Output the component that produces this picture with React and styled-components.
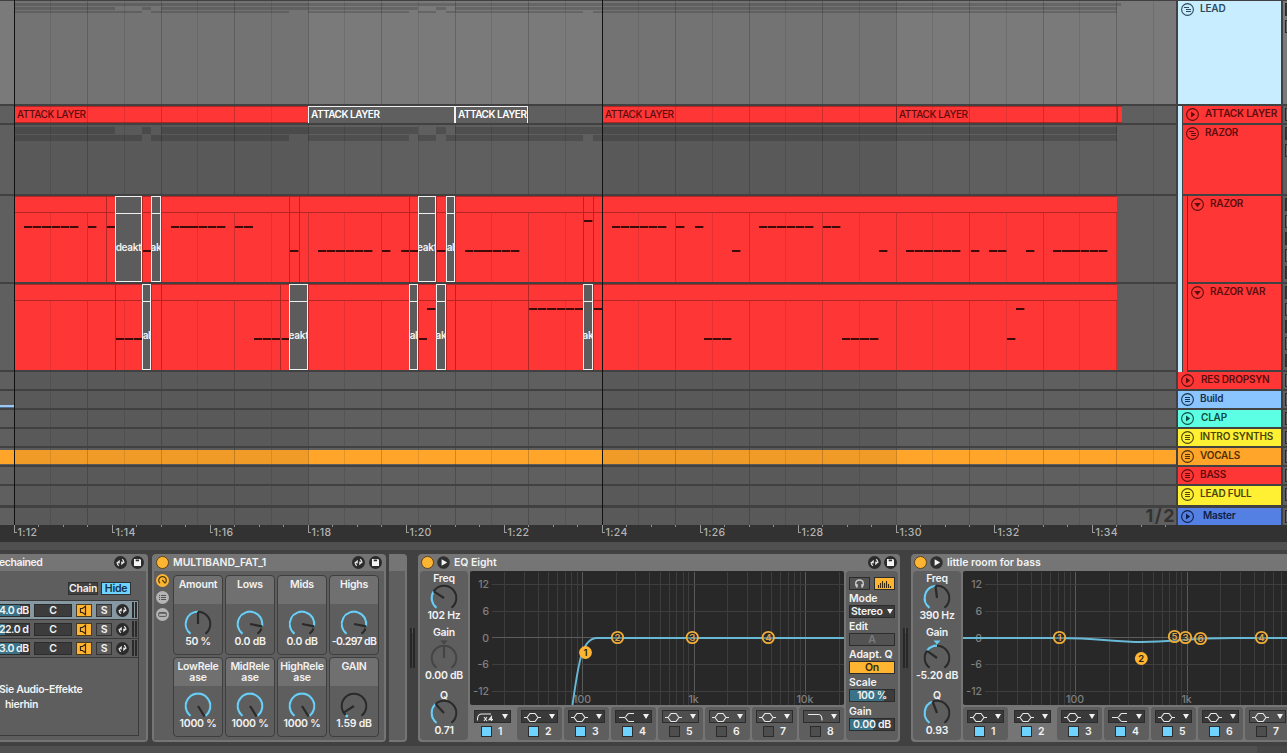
import React from 'react'
import styled, { createGlobalStyle, css } from 'styled-components'

const BEAT = 36.75
const START = 14

const range = (from, to) =>
  Array.from({ length: to - from }, (_, i) => from + i)

const gridStops = range(1, 32)
  .map(k => {
    const x = Math.floor(START + k * BEAT)
    const color = k % 2 === 0 ? 'rgba(0,0,0,0.19)' : 'rgba(0,0,0,0.1)'
    return `transparent ${x}px, ${color} ${x}px, ${color} ${x +
      1}px, transparent ${x + 1}px`
  })
  .join(', ')

const gridImage = `linear-gradient(to right, ${gridStops})`

const shadeImage = `linear-gradient(to right, transparent 14px, rgba(0,0,0,0.06) 14px,
  rgba(0,0,0,0.06) 308px, transparent 308px, transparent 602px, rgba(0,0,0,0.06) 602px,
  rgba(0,0,0,0.06) 896px, transparent 896px)`

// [x, width] pairs of the clips inside a folded group
const upperParts = [[15, 100], [142, 9], [161, 257], [436, 10], [455, 662]]
const lowerParts = [
  [15, 127],
  [151, 138],
  [308, 101],
  [418, 18],
  [446, 137],
  [593, 524]
]

// notes are [x, y, number of notes], muted clips are [x, width, label]
const razor = {
  edges: [106, 142, 161, 289, 299, 409, 436, 455, 583, 593],
  muted: [
    [115, 27, 'deakt'],
    [151, 10, 'ak'],
    [418, 18, 'eakt'],
    [446, 9, 'al']
  ],
  notes: [
    [24.5, 30, 6],
    [88, 30, 1],
    [107, 30, 0.9],
    [143, 54, 0.9],
    [171.5, 30, 6],
    [235.5, 30, 2],
    [290, 54, 1],
    [318.5, 54, 6],
    [382, 54, 1],
    [401, 54, 1.9],
    [437, 54, 1],
    [465.5, 54, 6],
    [584, 24, 1],
    [612.5, 30, 6],
    [676.5, 30, 1],
    [695, 30, 1],
    [732.5, 54, 1],
    [759.5, 30, 6],
    [823.5, 30, 2],
    [879.5, 54, 1],
    [906.5, 54, 6],
    [971, 54, 1],
    [989.5, 54, 2],
    [1026.5, 54, 1],
    [1053.5, 54, 6]
  ]
}

const razorVar = {
  edges: [115, 151, 161, 280, 308, 418, 446, 455, 528, 593],
  muted: [
    [142, 9, 'al'],
    [289, 19, 'eakt'],
    [409, 9, 'al'],
    [436, 10, 'ak'],
    [583, 10, 'ak']
  ],
  notes: [
    [116, 54, 3],
    [254.5, 54, 4],
    [419, 54, 0.9],
    [427, 24, 1],
    [529, 24, 6],
    [594, 24, 0.9],
    [704.5, 54, 3],
    [842.5, 54, 4],
    [1007.5, 54, 1],
    [1016.5, 24, 1]
  ]
}

const tracks = [
  { name: 'LEAD', color: '#c8edff', ink: '#2c4a5c', icon: 'group', h: 103 },
  { name: 'ATTACK LAYER', color: '#ff3636', icon: 'play', h: 17, level: 1 },
  { name: 'RAZOR', color: '#ff3636', icon: 'group', h: 69, level: 1 },
  { name: 'RAZOR', color: '#ff3636', icon: 'fold', h: 86, level: 2 },
  { name: 'RAZOR VAR', color: '#ff3636', icon: 'fold', h: 86, level: 2 },
  { name: 'RES DROPSYN', color: '#ff3636', icon: 'play', h: 17, pad: 1 },
  { name: 'Build', color: '#8bc5ff', ink: '#17304a', icon: 'list', h: 17 },
  { name: 'CLAP', color: '#5dffe4', ink: '#0f4a41', icon: 'play', h: 17, pad: 1 },
  { name: 'INTRO SYNTHS', color: '#fff034', ink: '#4a4508', icon: 'list', h: 17 },
  { name: 'VOCALS', color: '#ffa529', ink: '#4f2f05', icon: 'list', h: 17 },
  { name: 'BASS', color: '#ff3636', icon: 'list', h: 17 },
  { name: 'LEAD FULL', color: '#fff034', ink: '#4a4508', icon: 'list', h: 19, gap: 3 },
  { name: 'Master', color: '#5480e4', ink: '#101f45', icon: 'play', h: 17, pad: 3, gap: 0 }
]

const macros = [
  { label: 'Amount', value: '50 %', angle: 0 },
  { label: 'Lows', value: '0.0 dB', angle: 101 },
  { label: 'Mids', value: '0.0 dB', angle: 101 },
  { label: 'Highs', value: '-0.297 dB', angle: 101 },
  { label: 'LowRele ase', value: '1000 %', angle: 148 },
  { label: 'MidRele ase', value: '1000 %', angle: 148 },
  { label: 'HighRele ase', value: '1000 %', angle: 148 },
  { label: 'GAIN', value: '1.59 dB', angle: -123 }
]

const chains = [
  { volume: '4.0 dB', level: 20, active: true },
  { volume: '22.0 dB', level: 5 },
  { volume: '3.0 dB', level: 20 }
]

const polar = (cx, cy, r, deg) => {
  const a = (deg * Math.PI) / 180
  return [cx + r * Math.sin(a), cy - r * Math.cos(a)]
}

const arc = (from, to, r = 12.3) => {
  const [x1, y1] = polar(14, 14, r, from)
  const [x2, y2] = polar(14, 14, r, to)
  return `M${x1} ${y1} A${r} ${r} 0 ${to - from > 180 ? 1 : 0} 1 ${x2} ${y2}`
}

const Knob = ({ angle, bipolar, off }) => {
  const [px, py] = polar(14, 14, 12.3, angle)
  const dark = off ? '#454545' : '#2a2a2a'
  const low = angle === -123
  return (
    <KnobSvg width="28" height="28" viewBox="0 0 28 28">
      <path d={arc(-143, 143)} fill="none" stroke={dark} strokeWidth="2" />
      {!off && !low && (
        <path
          d={bipolar ? arc(angle, 0) : arc(-143, Math.min(angle, 143))}
          fill="none"
          stroke="#6ccdf4"
          strokeWidth="2.2"
        />
      )}
      {angle > 90 && angle < 140 && (
        <path d={arc(angle, 112)} fill="none" stroke="#5e5e5e" strokeWidth="2.6" />
      )}
      {low && <path d={arc(-150, -138)} stroke="#6ccdf4" strokeWidth="2.6" />}
      <path d={`M14 14 L${px} ${py}`} stroke={dark} strokeWidth="2.2" />
      {(bipolar || off) && (
        <path d="M10.5 -3.5 h7 l-3.5 4 z" fill={off ? '#454545' : '#6ccdf4'} />
      )}
    </KnobSvg>
  )
}

const TrackIcon = ({ type, color }) => (
  <svg width="13" height="13" viewBox="0 0 13 13" fill="none" stroke={color}>
    <circle cx="6.5" cy="6.5" r="5.9" strokeWidth="1.1" />
    {type === 'play' && <path d="M5 3.6 L9.2 6.5 L5 9.4 z" fill={color} stroke="none" />}
    {type === 'fold' && <path d="M3.2 4.9 h6.6 L6.5 9.2 z" fill={color} stroke="none" />}
    {type === 'list' && <path d="M4 4.5 h5 M4 6.5 h5 M4 8.5 h5" />}
    {type === 'group' && <path d="M3 4.5 h5 M5 6.5 h5 M5 8.5 h5" />}
  </svg>
)

const SwapIcon = () => (
  <svg width="13" height="13" viewBox="0 0 13 13">
    <circle cx="6.5" cy="6.5" r="6.5" fill="#2b2b2b" />
    <path
      d="M3.2 7 Q3.2 9 5 9.6 M9.8 6 Q9.8 4 8 3.4"
      stroke="#e2e2e2"
      strokeWidth="1.2"
      fill="none"
    />
    <path d="M2 7 L5.8 3.8 L5.8 7.4 z M11 6 L7.2 9.2 L7.2 5.6 z" fill="#e2e2e2" />
  </svg>
)

const SaveIcon = () => (
  <svg width="13" height="13" viewBox="0 0 13 13">
    <circle cx="6.5" cy="6.5" r="6.5" fill="#2b2b2b" />
    <path d="M3 3 h6 l1 1 v6 h-7 z" fill="#f4f4f4" />
    <path d="M4.7 3.6 h3.4 v1.7 h-3.4 z" fill="#2b2b2b" />
  </svg>
)

const PlayIcon = () => (
  <svg width="13" height="13" viewBox="0 0 13 13">
    <circle cx="6.5" cy="6.5" r="6.3" fill="#303030" />
    <path d="M4.6 3.2 L10.2 6.5 L4.6 9.8 z" fill="#f4f4f4" />
  </svg>
)

const SpeakerIcon = () => (
  <svg width="16" height="13" viewBox="0 0 16 13" fill="none" stroke="#33240a">
    <path d="M4.5 4.5 h2 l3 -2.3 v8.6 l-3 -2.3 h-2 z" strokeWidth="1.2" />
  </svg>
)

const shapes = {
  cut: 'M1.5 9.5 V8 Q1.5 3 6 3 H15',
  bell: 'M1 6.5 H4 L7 2.5 H12 L15 6.5 H18 M4 6.5 L7 10.5 H12 L15 6.5',
  shelf: 'M2 6.5 H7.5 C9.5 6.5 9.5 2.5 12 2.5 H17 M7.5 6.5 C9.5 6.5 9.5 10.5 12 10.5 H17',
  lowpass: 'M3 3.5 H13.5 Q17 3.5 17 9.5'
}

const Band = ({ n, shape, on, selected }) => (
  <BandCell $selected={selected}>
    <BandType $off={!on}>
      <svg
        width="19"
        height="12"
        viewBox="0 0 19 12"
        fill="none"
        stroke="#e8e8e8"
        strokeWidth="1.1"
      >
        <path d={shapes[shape]} />
        {shape === 'cut' && (
          <path d="M8 6 l3 4 M11 6 l-3 4 M15.5 10 V5.5 L13 8.6 H17" />
        )}
      </svg>
      <Down />
    </BandType>
    <BandFoot>
      <Check $on={on} />
      <BandNumber>{n}</BandNumber>
    </BandFoot>
  </BandCell>
)

const freqX = f => 112.5 + 111.5 * Math.log10(f / 100)

const freqs = [
  ...range(2, 11).map(i => i * 10),
  ...range(2, 11).map(i => i * 100),
  ...range(2, 11).map(i => i * 1000),
  20000
]

const Spectrum = ({ curve, nodes }) => (
  <Graph width="374" height="134" viewBox="0 0 374 134">
    <rect width="374" height="134" rx="2" fill="#282828" />
    {freqs.map(f => {
      const major = [100, 1000, 10000].includes(f)
      return (
        <rect
          key={f}
          x={Math.round(freqX(f) - 0.5)}
          y="1"
          width="1"
          height={major ? 122 : 133}
          fill={major ? '#5a5a5a' : '#3d3d3d'}
        />
      )
    })}
    {[12, 6, 0, -6, -12].map((db, i) => (
      <g key={db}>
        <rect
          x="22"
          y={Math.round(13 + i * 26.7)}
          width="352"
          height="1"
          fill={db === 0 ? '#5c5c5c' : '#3f3f3f'}
        />
        <text x="19" y={17.3 + i * 26.7} textAnchor="end">
          {db}
        </text>
      </g>
    ))}
    {[[100, '100'], [1000, '1k'], [10000, '10k']].map(([f, label]) => (
      <text key={label} x={freqX(f) - 0.5} y="132" textAnchor="middle">
        {label}
      </text>
    ))}
    <path d={curve} fill="none" stroke="#67b9d6" strokeWidth="1.9" />
    {nodes.map(([x, y, n, filled]) => (
      <g key={n}>
        <circle
          cx={x}
          cy={y}
          r={filled ? 6.4 : 5.7}
          fill={filled ? '#ffb532' : 'rgba(40,40,40,0.35)'}
          stroke={filled ? 'none' : '#f2ae38'}
          strokeWidth="1.8"
        />
        <NodeLabel x={x} y={y + 3.5} textAnchor="middle" $filled={filled}>
          {n}
        </NodeLabel>
      </g>
    ))}
  </Graph>
)

const EqDevice = ({ title, knobs, curve, nodes, bands, selected, children }) => (
  <Device $width={482}>
    <DeviceHead>
      <Lamp />
      <PlayIcon />
      <Title>{title}</Title>
      {children && (
        <HeadTools $tight>
          <SwapIcon />
          <SaveIcon />
        </HeadTools>
      )}
    </DeviceHead>
    <EqBody>
      <KnobPanel>
        {knobs.map(k => (
          <KnobSlot key={k.label} $label={k.label}>
            <span>{k.label}</span>
            <Knob angle={k.angle} bipolar={k.bipolar} off={k.off} />
            <KnobValue>{k.value}</KnobValue>
          </KnobSlot>
        ))}
      </KnobPanel>
      <EqMain>
        <Spectrum curve={curve} nodes={nodes} />
        <Bands>
          {bands.map((b, i) => (
            <Band key={i} n={i + 1} shape={b[0]} on={b[1]} selected={selected === i + 1} />
          ))}
        </Bands>
      </EqMain>
      {children}
    </EqBody>
  </Device>
)

const MidiLane = ({ data }) => (
  <Lane $h={86}>
    <MidiClip>
      <MidiHead />
    </MidiClip>
    {data.edges.map(x => (
      <Edge key={x} style={{ left: x }} />
    ))}
    {data.notes.map(([x, y, count]) => (
      <Notes
        key={`${x}-${y}`}
        style={{ left: Math.floor(x), top: y, width: count * 9.2 }}
      />
    ))}
    {data.muted.map(([x, w, label]) => (
      <Muted key={x} style={{ left: x, width: w }}>
        <MutedHead />
        <MutedText>{label}</MutedText>
      </Muted>
    ))}
  </Lane>
)

const Parts = ({ parts, y, h }) =>
  parts.map(([x, w]) => (
    <Part key={x} style={{ left: x, width: w, top: y, height: h }} />
  ))

const Arrangement = () => (
  <Lanes>
    <Lane $h={103} $bright>
      <Parts parts={[[15, 1106]]} y={2} h={3} />
      <Parts parts={upperParts} y={6} h={3} />
      <Parts parts={lowerParts} y={10} h={2} />
    </Lane>
    <Lane $h={17}>
      <NamedClip style={{ left: 15, width: 293 }}>ATTACK LAYER</NamedClip>
      <NamedClip $muted style={{ left: 308, width: 147 }}>ATTACK LAYER</NamedClip>
      <NamedClip $muted style={{ left: 455, width: 73 }}>ATTACK LAYER</NamedClip>
      <NamedClip style={{ left: 603, width: 293 }}>ATTACK LAYER</NamedClip>
      <NamedClip $edge style={{ left: 896, width: 221 }}>ATTACK LAYER</NamedClip>
      <NamedClip $edge style={{ left: 1117, width: 4 }} />
    </Lane>
    <Lane $h={69}>
      <Parts parts={upperParts} y={2} h={7} />
      <Parts parts={lowerParts} y={10} h={6} />
    </Lane>
    <MidiLane data={razor} />
    <MidiLane data={razorVar} />
    <Lane $h={17} />
    <Lane $h={17}>
      <BuildClip />
    </Lane>
    <Lane $h={17} />
    <Lane $h={17} />
    <Lane $h={17}>
      <AudioClip />
    </Lane>
    <Lane $h={17} />
    <Lane $h={19} $gap={3} />
    <Lane $h={17} $gap={0}>
      <Resolution>1/2</Resolution>
    </Lane>
    <Marker style={{ left: 14 }} />
    <Marker style={{ left: 602 }} />
  </Lanes>
)

const Ruler = () => (
  <RulerBar>
    {range(0, 12).map(i => (
      <RulerMark key={i}>
        <Foot />
        <Time>{`1:${12 + i * 2}`}</Time>
      </RulerMark>
    ))}
  </RulerBar>
)

const App = () => (
  <Page>
    <GlobalStyle />
    <Top>
      <Arrangement />
      <Headers>
        {tracks.map((t, i) => (
          <Header key={i} $h={t.h} $gap={t.gap}>
            {t.level > 0 && <Nest $color="#c8edff" />}
            {t.level > 1 && <Nest $color="#ff3636" />}
            <HeaderBox $color={t.color} $ink={t.ink || '#5c0d0d'} $pad={t.pad} $gap={t.gap}>
              <TrackIcon type={t.icon} color={t.ink || '#5c0d0d'} />
              <TrackName>{t.name}</TrackName>
            </HeaderBox>
          </Header>
        ))}
      </Headers>
      <Mixer>
        {tracks.map((t, i) => (
          <Strip key={i} $h={t.h} $gap={t.gap} $bright={i === 0}>
            {range(0, Math.min(5, Math.ceil((t.h - 8) / 17)))
              .slice(0, t.icon === 'group' ? 2 : 5)
              .map(n => (
                <Slot key={n} $dark={t.h > 20 && n % 2 === 0} />
              ))}
          </Strip>
        ))}
      </Mixer>
    </Top>
    <Ruler />
    <Splitter />
    <Devices>
      <Device $width={148} $open>
        <DeviceHead $tight>
          <Title $cut>echained</Title>
          <HeadTools>
            <SwapIcon />
            <SaveIcon />
          </HeadTools>
        </DeviceHead>
        <RackBody>
          <RackButtons>
            <SmallButton>Chain</SmallButton>
            <SmallButton $on>Hide</SmallButton>
          </RackButtons>
          <ChainList>
            {chains.map(c => (
              <Chain key={c.volume} $active={c.active}>
                <Volume $level={c.level}>{c.volume}</Volume>
                <Pan>C</Pan>
                <Speaker>
                  <SpeakerIcon />
                </Speaker>
                <Solo>S</Solo>
                <SwapIcon />
                <ChainMeter />
              </Chain>
            ))}
            <DropHint>
              <HintLine>Sie Audio-Effekte</HintLine>
              <HintLine $second>hierhin</HintLine>
            </DropHint>
          </ChainList>
        </RackBody>
      </Device>
      <Gap $w={4} />
      <Device $width={234}>
        <DeviceHead $inset={4}>
          <Lamp />
          <Title>MULTIBAND_FAT_1</Title>
          <HeadTools>
            <SwapIcon />
            <SaveIcon />
          </HeadTools>
        </DeviceHead>
        <MacroBody>
          <Views>
            <svg width="13" height="13" viewBox="0 0 13 13">
              <circle cx="6.5" cy="6.5" r="6.5" fill="#ffb532" />
              <path
                d="M4 9.2 A3.8 3.8 0 1 1 9 9.2 M6.3 6 L9 9.2"
                stroke="#55400f"
                fill="none"
                strokeWidth="1.3"
              />
            </svg>
            <svg width="13" height="13" viewBox="0 0 13 13">
              <circle cx="6.5" cy="6.5" r="6.5" fill="#b4b4b4" />
              <path d="M3 4.5 h1 M5 4.5 h5 M3 6.5 h1 M5 6.5 h5 M3 8.5 h1 M5 8.5 h5" stroke="#555" />
            </svg>
            <svg width="13" height="13" viewBox="0 0 13 13">
              <circle cx="6.5" cy="6.5" r="6.5" fill="#b4b4b4" />
              <rect x="2.7" y="4.6" width="7.6" height="3.8" rx="0.8" fill="none" stroke="#555" />
              <path d="M3 5.2 h7" stroke="#555" />
            </svg>
          </Views>
          <Macros>
            {macros.map(m => (
              <Macro key={m.label}>
                <MacroLabel>{m.label}</MacroLabel>
                <Knob angle={m.angle} />
                <MacroValue $long={m.value.length > 8}>{m.value}</MacroValue>
              </Macro>
            ))}
          </Macros>
        </MacroBody>
      </Device>
      <Gap $w={3} />
      <Stub />
      <Gap $w={11}>
        <OutMeter />
      </Gap>
      <EqDevice
        title="EQ Eight"
        selected={1}
        knobs={[
          { label: 'Freq', value: '102 Hz', angle: -57 },
          { label: 'Gain', value: '0.00 dB', angle: 0, off: true },
          { label: 'Q', value: '0.71', angle: -43 }
        ]}
        curve="M102.5 134 C108 96 111 67 127 67 H374"
        nodes={[[115.5, 81.5, 1, true], [147.5, 66.5, 2], [222.3, 66.5, 3], [298.3, 66.5, 4]]}
        bands={[
          ['cut', true],
          ['bell', true],
          ['bell', true],
          ['shelf', true],
          ['bell', false],
          ['bell', false],
          ['bell', false],
          ['lowpass', false]
        ]}
      >
        <Options>
          <OptionIcons>
            <OptionIcon>
              <svg width="11" height="11" viewBox="0 0 11 11" fill="none" stroke="#c8c8c8">
                <path d="M3 9 C0.5 6 1.5 2 5.5 2 C9.5 2 10.5 6 8 9" strokeWidth="1.4" />
                <path d="M2.8 6 v3.4 M8.2 6 v3.4" strokeWidth="1.8" />
              </svg>
            </OptionIcon>
            <OptionIcon $on>
              <svg width="15" height="10" viewBox="0 0 15 10" stroke="#3a2a08" strokeWidth="1.1">
                <path d="M1.5 9 V6 M3.5 9 V4 M5.5 9 V2 M7.5 9 V4 M9.5 9 V2 M11.5 9 V5 M13.5 9 V7" />
              </svg>
            </OptionIcon>
          </OptionIcons>
          <OptionLabel>Mode</OptionLabel>
          <OptionBox $select>
            Stereo
            <Down />
          </OptionBox>
          <OptionLabel>Edit</OptionLabel>
          <OptionBox $off>A</OptionBox>
          <OptionLabel>Adapt. Q</OptionLabel>
          <OptionBox $on>On</OptionBox>
          <OptionLabel>Scale</OptionLabel>
          <OptionBox $fill={34}>100 %</OptionBox>
          <OptionLabel $wide>Gain</OptionLabel>
          <OptionBox $fill={23}>0.00 dB</OptionBox>
        </Options>
      </EqDevice>
      <Gap $w={11}>
        <OutMeter />
      </Gap>
      <EqDevice
        title="little room for bass"
        selected={2}
        knobs={[
          { label: 'Freq', value: '390 Hz', angle: -7 },
          { label: 'Gain', value: '-5.20 dB', angle: -54, bipolar: true },
          { label: 'Q', value: '0.93', angle: -21 }
        ]}
        curve="M0 67 H95 C135 67 150 71 179 71 C212 71 220 67 270 67 H374"
        nodes={[
          [96.5, 66.5, 1],
          [178.3, 87.5, 2, true],
          [211.5, 65.5, 5],
          [222.5, 66.5, 3],
          [237.5, 67.5, 6],
          [298.5, 66.5, 4]
        ]}
        bands={[
          ['bell', true],
          ['bell', true],
          ['bell', true],
          ['shelf', true],
          ['bell', true],
          ['bell', true],
          ['bell', false],
          ['lowpass', false]
        ]}
      />
    </Devices>
    <ScrollBar>
      <ScrollThumb />
    </ScrollBar>
  </Page>
)

const GlobalStyle = createGlobalStyle`
  body {
    margin: 0;
    background: #414141;
  }

  * {
    box-sizing: border-box;
  }

  svg {
    display: block;
    flex: none;
  }
`

const Page = styled.div`
  display: flex;
  flex-direction: column;
  width: 1287px;
  height: 753px;
  overflow: hidden;
  background: #414141;
  color: #f2f2f2;
  font-family: Inter, 'Liberation Sans', sans-serif;
  font-size: 10.5px;
  font-weight: 500;
  line-height: 12px;
`

const Top = styled.div`
  display: flex;
  height: 525px;
`

const Lanes = styled.div`
  position: relative;
  width: 1176px;
  padding-top: 1px;
  overflow: hidden;
`

const Lane = styled.div`
  position: relative;
  height: ${p => p.$h}px;
  margin-bottom: ${p => (p.$gap === undefined ? 2 : p.$gap)}px;
  background: ${shadeImage} ${p => (p.$bright ? '#7a7a7a' : '#5f5f5f')};

  &::after {
    content: '';
    position: absolute;
    inset: 0;
    background: ${gridImage};
  }
`

const Part = styled.div`
  position: absolute;
  background: rgba(0, 0, 0, 0.16);
`

const NamedClip = styled.div`
  position: absolute;
  top: 0;
  height: 17px;
  padding: 0 2px;
  overflow: hidden;
  white-space: nowrap;
  font-size: 10px;
  letter-spacing: -0.4px;
  line-height: 15px;
  background: #ff3636;
  color: #5c0d0d;
  border-top: 1px solid #b32626;
  border-bottom: 1px solid #b32626;
  ${p => p.$edge && 'border-left: 1px solid #b32626;'}
  ${p =>
    p.$muted &&
    css`
      z-index: 1;
      padding: 0 1px 0 2px;
      background: #5f5f5f;
      color: #fff;
      font-weight: 600;
      letter-spacing: -0.5px;
      border: 1px solid #f0f0f0;
      border-bottom: 0;
    `}
`

const MidiClip = styled.div`
  position: absolute;
  left: 15px;
  width: 1102px;
  height: 86px;
  background: #ff3636;
`

const MidiHead = styled.div`
  position: relative;
  z-index: 1;
  height: 17px;
  background: #ff3636;
  border-top: 1px solid #b32626;
  border-bottom: 1px solid #b32626;
`

const Edge = styled.div`
  position: absolute;
  z-index: 1;
  width: 1px;
  height: 86px;
  background: #b32626;
`

const Notes = styled.div`
  position: absolute;
  height: 2px;
  background: repeating-linear-gradient(
    to right,
    #3f0a0a 0 8.3px,
    #b02626 8.3px 9.2px
  );
`

const Muted = styled.div`
  position: absolute;
  z-index: 1;
  height: 86px;
  overflow: hidden;
  background: #5c5c5c;
  border: 1px solid #f0f0f0;
`

const MutedHead = styled.div`
  height: 17px;
  border-bottom: 1px solid #f0f0f0;
`

const MutedText = styled.div`
  display: flex;
  justify-content: center;
  margin-top: 27px;
  font-size: 10px;
  font-weight: 600;
  letter-spacing: -0.3px;
`

const BuildClip = styled.div`
  position: absolute;
  top: 14px;
  left: 0;
  width: 14px;
  height: 3px;
  background: #9ec8f0;
  border-bottom: 1px solid #4d7396;
`

const AudioClip = styled.div`
  position: absolute;
  top: 2px;
  left: 0;
  width: 1176px;
  height: 14px;
  background: ${shadeImage} #ffa529;
`

const Resolution = styled.div`
  text-align: right;
  font-size: 18px;
  font-weight: 700;
  line-height: 16px;
  letter-spacing: 1.5px;
  color: #333;
`

const Marker = styled.div`
  position: absolute;
  z-index: 2;
  top: 0;
  width: 1px;
  height: 525px;
  background: #111;
`

const Headers = styled.div`
  width: 107px;
  padding: 1px 2px 0 2px;
`

const Header = styled.div`
  display: flex;
  height: ${p => p.$h + (p.$gap === undefined ? 2 : p.$gap)}px;
`

const Nest = styled.div`
  width: 5px;
  background: ${p => p.$color};
  border-right: 1px solid #414141;
`

const HeaderBox = styled.div`
  display: flex;
  flex: 1;
  gap: ${p => 6 + (p.$pad || 0)}px;
  padding: 2px 0 0 3px;
  overflow: hidden;
  background: ${p => p.$color};
  color: ${p => p.$ink};
  border-bottom: ${p => (p.$gap === undefined ? 2 : p.$gap)}px solid #414141;
`

const TrackName = styled.span`
  margin-top: -1px;
  white-space: nowrap;
  font-size: 10px;
  font-weight: 600;
  letter-spacing: -0.2px;
`

const Mixer = styled.div`
  width: 4px;
  margin-top: 1px;
`

const Strip = styled.div`
  height: ${p => p.$h}px;
  margin-bottom: ${p => (p.$gap === undefined ? 2 : p.$gap)}px;
  padding: 2px 0 0 2px;
  overflow: hidden;
  background: ${p => (p.$bright ? '#7a7a7a' : '#5f5f5f')};
`

const Slot = styled.div`
  height: 13px;
  margin-bottom: 4px;
  border: 1px solid #2a2a2a;
  border-right: 0;
  background: ${p => (p.$dark ? '#383838' : '#666')};
`

const RulerBar = styled.div`
  display: flex;
  height: 17px;
  padding-left: 14px;
  background: #323232;
`

const RulerMark = styled.div`
  display: flex;
  flex: none;
  width: 98px;
  background: linear-gradient(
      to right,
      transparent 24px,
      #909090 24px 25px,
      transparent 25px 49px,
      #909090 49px 50px,
      transparent 50px 73px,
      #909090 73px 74px,
      transparent 74px
    )
    0 0 / 98px 2px no-repeat;
`

const Foot = styled.div`
  width: 3px;
  height: 8px;
  border-left: 1px solid #9a9a9a;
  border-bottom: 1px solid #9a9a9a;
`

const Time = styled.span`
  margin-left: 0.5px;
  line-height: 15px;
  letter-spacing: 0.35px;
  color: #b4b4b4;
`

const Splitter = styled.div`
  height: 8px;
  background: #505050;
`

const Devices = styled.div`
  display: flex;
  height: 196px;
  padding: 4px 0;
  font-weight: 600;
  letter-spacing: -0.25px;
`

const Device = styled.div`
  flex: none;
  width: ${p => p.$width}px;
  height: 188px;
  overflow: hidden;
  background: #757575;
  border-radius: ${p => (p.$open ? '0 4px 4px 0' : '4px')};
`

const DeviceHead = styled.div`
  display: flex;
  align-items: center;
  gap: 3px;
  height: 17px;
  padding: 0 3px 0 ${p => (p.$tight ? 0 : p.$inset || 3)}px;
`

const Title = styled.span`
  white-space: nowrap;
  margin-left: ${p => (p.$cut ? -1 : 1)}px;
  letter-spacing: ${p => (p.$cut ? '-0.4px' : '-0.03px')};
`

const HeadTools = styled.div`
  display: flex;
  gap: ${p => (p.$tight ? 3 : 4)}px;
  margin: 0 ${p => (p.$tight ? 0 : 1)}px 0 auto;
`

const Lamp = styled.div`
  width: 13px;
  height: 13px;
  border-radius: 50%;
  background: #ffb532;
  border: 1px solid #5a431a;
`

const Gap = styled.div`
  flex: none;
  width: ${p => p.$w}px;
`

const OutMeter = styled.div`
  height: 40px;
  margin: 74px 3px 0;
  border-left: 2px solid #272727;
  border-right: 2px solid #272727;
  background: linear-gradient(#555 0 5px, #414141 5px);
`

const Stub = styled.div`
  flex: none;
  width: 18px;
  height: 188px;
  border: solid #757575;
  border-width: 17px 2px 2px 0;
  border-radius: 0 4px 4px 0;
  background: #5f5f5f;
`

const RackBody = styled.div`
  height: 169px;
  margin-right: 2px;
  padding: 11px 7px 0 0;
  background: #5e5e5e;
`

const RackButtons = styled.div`
  display: flex;
  justify-content: flex-end;
  gap: 3px;
  margin-right: 8px;
`

const SmallButton = styled.div`
  width: 30px;
  height: 13px;
  text-align: center;
  line-height: 12px;
  background: ${p => (p.$on ? '#6fd3ff' : '#414141')};
  color: ${p => (p.$on ? '#12303e' : '#f2f2f2')};
  border: 1px solid #303030;
`

const ChainList = styled.div`
  height: 136px;
  margin-top: 5px;
  border: 1px solid #3a3a3a;
  border-left: 0;
`

const Chain = styled.div`
  display: flex;
  align-items: center;
  gap: 4px;
  height: 19px;
  line-height: 11px;
  border-bottom: 1px solid #3a3a3a;
  background: ${p => (p.$active ? '#8698a1' : '#5e5e5e')};
`

const Volume = styled.div`
  width: 30px;
  height: 13px;
  overflow: hidden;
  white-space: nowrap;
  text-indent: -1px;
  letter-spacing: -0.5px;
  background: linear-gradient(
    to right,
    #3a7288 ${p => p.$level}px,
    #3a3a3a ${p => p.$level}px
  );
  border: 1px solid #2c2c2c;
  border-left: 0;
`

const Pan = styled.div`
  width: 38px;
  height: 13px;
  text-align: center;
  background: #3c3c3c;
  border: 1px solid #2c2c2c;
`

const Speaker = styled.div`
  width: 16px;
  height: 13px;
  background: #ffb532;
  outline: 1px solid #4a3a18;
  outline-offset: -1px;
`

const Solo = styled.div`
  width: 16px;
  height: 13px;
  text-align: center;
  background: #5c5c5c;
  border: 1px solid #333;
`

const ChainMeter = styled.div`
  width: 5px;
  height: 16px;
  margin-left: -1px;
  border: solid #2a2a2a;
  border-width: 0 2px;
`

const DropHint = styled.div`
  padding-top: 24px;
`

const HintLine = styled.div`
  white-space: nowrap;
  margin-left: ${p => (p.$second ? 5 : -1)}px;
  line-height: 15px;
  letter-spacing: -0.32px;
`

const MacroBody = styled.div`
  display: flex;
  height: 169px;
  margin: 0 2px;
  background: #5e5e5e;
`

const Views = styled.div`
  display: flex;
  flex-direction: column;
  gap: 4px;
  width: 19px;
  padding: 3px 0 0 2px;
`

const Macros = styled.div`
  display: grid;
  grid-template-columns: repeat(4, 50px);
  grid-template-rows: 80px 80px;
  gap: 2px;
  padding-top: 4px;
`

const Macro = styled.div`
  display: flex;
  flex-direction: column;
  align-items: center;
  overflow: hidden;
  text-align: center;
  background: linear-gradient(#707070 28px, #5e5e5e 28px);
  border: 1px solid #3e3e3e;
  border-radius: 4px;
`

const MacroLabel = styled.div`
  flex: none;
  width: 46px;
  height: 34px;
  padding-top: 3px;
  line-height: 11px;
`

const KnobSvg = styled.svg`
  overflow: visible;
`

const MacroValue = styled.div`
  margin-top: -2px;
  white-space: nowrap;
  ${p => p.$long && 'letter-spacing: -0.6px;'}
`

const EqBody = styled.div`
  display: flex;
  gap: 2px;
  margin-left: 2px;
`

const KnobPanel = styled.div`
  width: 48px;
  height: 169px;
  padding-top: 2px;
  background: #5e5e5e;
  border-radius: 4px;
`

const knobOffset = { Freq: -1, Gain: 5, Q: -3 }

const KnobSlot = styled.div`
  display: flex;
  flex-direction: column;
  align-items: center;
  height: ${p => (p.$label === 'Gain' ? 63 : 54)}px;
  white-space: nowrap;

  svg {
    margin-top: ${p => knobOffset[p.$label]}px;
  }
`

const KnobValue = styled.div`
  margin-top: -2px;
`

const EqMain = styled.div`
  width: 374px;
`

const Graph = styled.svg`
  text {
    fill: #808080;
    font-size: 10.5px;
    font-weight: 500;
    letter-spacing: 0;
  }
`

const NodeLabel = styled.text`
  && {
    fill: ${p => (p.$filled ? '#2a2210' : '#e0a445')};
    font-size: 9.5px;
    font-weight: 600;
  }
`

const Bands = styled.div`
  display: flex;
  gap: 2px;
  margin-top: 2px;
`

const BandCell = styled.div`
  width: 45px;
  height: 33px;
  padding: 3px 4px 0;
  border-radius: 3px;
  background: ${p => (p.$selected ? '#757575' : '#5e5e5e')};
`

const Down = styled.div`
  width: 0;
  height: 0;
  border: solid transparent;
  border-width: 5px 3.5px 0;
  border-top-color: #f2f2f2;
`

const BandType = styled.div`
  display: flex;
  align-items: center;
  justify-content: space-between;
  height: 13px;
  padding: 0 2px 0 1px;
  background: ${p => (p.$off ? '#4e4e4e' : '#3a3a3a')};
  border: 1px solid #2c2c2c;
`

const BandFoot = styled.div`
  display: flex;
  gap: 6px;
  padding: 3px 0 0 7px;
`

const Check = styled.div`
  width: 11px;
  height: 11px;
  background: ${p => (p.$on ? '#6fd3ff' : '#4e4e4e')};
  border: 1px solid #2c2c2c;
`

const BandNumber = styled.span`
  font-size: 10.5px;
`

const Options = styled.div`
  width: 52px;
  height: 169px;
  padding: 6px 3px 0;
  background: #5e5e5e;
  border-radius: 4px;
`

const OptionIcons = styled.div`
  display: flex;
  justify-content: space-between;
  margin-bottom: 3px;
`

const OptionIcon = styled.div`
  display: flex;
  align-items: center;
  justify-content: center;
  width: 21px;
  height: 13px;
  background: ${p => (p.$on ? '#ffb532' : '#525252')};
  border: 1px solid #2c2c2c;
`

const OptionLabel = styled.div`
  white-space: nowrap;
  margin-top: ${p => (p.$wide ? 4 : 3)}px;
  letter-spacing: -0.1px;
`

const OptionBox = styled.div`
  display: flex;
  align-items: center;
  justify-content: ${p => (p.$select ? 'space-between' : 'center')};
  height: 13px;
  padding: 0 1px;
  white-space: nowrap;
  color: ${p => (p.$off ? '#7c7c7c' : p.$on ? '#3a2a08' : '#f2f2f2')};
  background: ${p =>
    p.$on
      ? '#ffb532'
      : p.$off
      ? '#525252'
      : `linear-gradient(to right, #3a7288 ${p.$fill || 0}px, #3c3c3c ${p.$fill || 0}px)`};
  border: 1px solid #2c2c2c;
`

const ScrollBar = styled.div`
  height: 7px;
  background: #474747;
`

const ScrollThumb = styled.div`
  width: 1257px;
  height: 7px;
  background: #505050;
`

export default App
